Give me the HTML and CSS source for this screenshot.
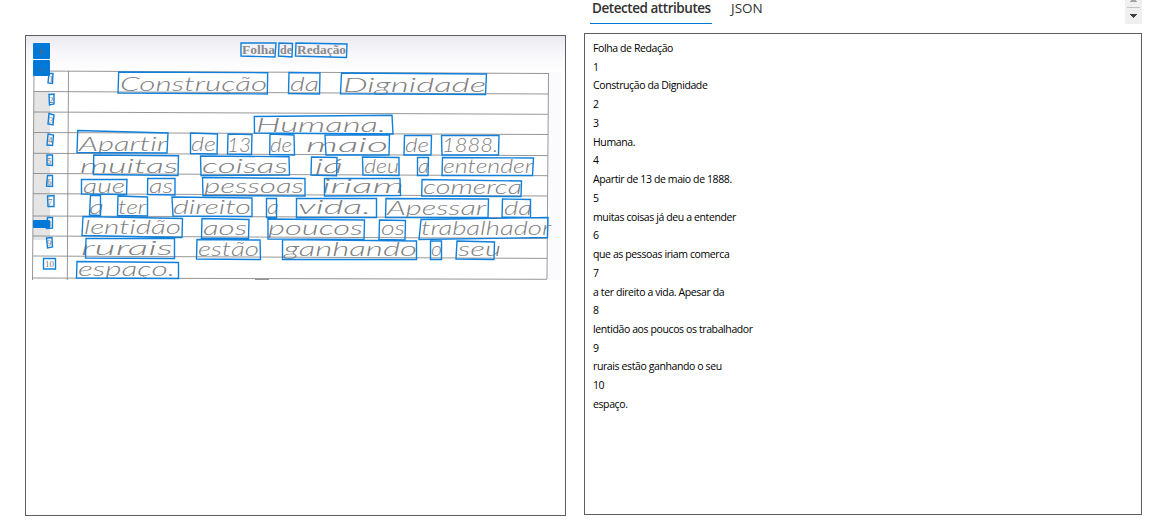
FILE: index.html
```html
<!DOCTYPE html>
<html lang="en">
<head>
<meta charset="utf-8">
<title>Detected attributes</title>
<link rel="stylesheet" href="styles.css">
</head>
<body>
<main class="workspace">
  <section class="document-panel">
    <svg class="scan" viewBox="26 36 539 479" width="539" height="479">
      <defs>
        <linearGradient id="paper" x1="0" y1="0" x2="0" y2="1">
          <stop offset="0" stop-color="#e9e8ee"/><stop offset=".4" stop-color="#f6f6fa"/><stop offset="1" stop-color="#fff"/>
        </linearGradient>
      </defs>
      <rect x="26" y="36" width="539" height="36" fill="url(#paper)"/>
      <rect x="549" y="72" width="12" height="208" fill="#fbfbfe"/>
      <path class="margin-shade" d="M34 92H50V240H33Z"/>
      <path class="rule" d="M34 71L548.500 73.500M34 91.500L548 94M34 112L548 114.300M34 132.500L548 134.500M33 153.300L548 155.600M33 173.500L548 175.700M33 193.700L547 196M33 216L547 217.700M33 236L547 238.400M33 256L547 258.400M32 278L547 279.300M34 71L32.500 280M68.500 71L67.300 280M548.500 73L547 279M255 279.500h14"/>
      <g class="printed">
        <text x="242" y="54" textLength="33" lengthAdjust="spacingAndGlyphs">Folha</text>
        <text x="280" y="54" textLength="12" lengthAdjust="spacingAndGlyphs">de</text>
        <text x="297" y="54" textLength="49" lengthAdjust="spacingAndGlyphs">Redação</text>
      </g>
      <g class="numbers">
        <text x="49" y="82">1</text><text x="49" y="103">2</text><text x="49" y="123">3</text><text x="48" y="143">4</text><text x="47" y="164">5</text><text x="47" y="185">6</text><text x="48" y="205">7</text><text x="47" y="227">8</text><text x="47" y="246">9</text><text x="45" y="267" textLength="9">10</text>
      </g>
      <g class="handwriting">
        <text x="120" y="91" textLength="147" lengthAdjust="spacingAndGlyphs">Construção</text>
        <text x="290" y="91" textLength="29" lengthAdjust="spacingAndGlyphs">da</text>
        <text x="343" y="92" textLength="143" lengthAdjust="spacingAndGlyphs">Dignidade</text>
        <text x="256" y="132" textLength="130" lengthAdjust="spacingAndGlyphs">Humana.</text>
        <text x="79" y="151" textLength="88" lengthAdjust="spacingAndGlyphs">Apartir</text>
        <text x="191" y="151" textLength="25" lengthAdjust="spacingAndGlyphs">de</text>
        <text x="227" y="152" textLength="24" lengthAdjust="spacingAndGlyphs">13</text>
        <text x="270" y="152" textLength="22" lengthAdjust="spacingAndGlyphs">de</text>
        <text x="306" y="152" textLength="82" lengthAdjust="spacingAndGlyphs">maio</text>
        <text x="405" y="152" textLength="24" lengthAdjust="spacingAndGlyphs">de</text>
        <text x="442" y="152" textLength="56" lengthAdjust="spacingAndGlyphs">1888.</text>
        <text x="80" y="173" textLength="98" lengthAdjust="spacingAndGlyphs">muitas</text>
        <text x="202" y="173" textLength="86" lengthAdjust="spacingAndGlyphs">coisas</text>
        <text x="315" y="173" textLength="28" lengthAdjust="spacingAndGlyphs">já</text>
        <text x="364" y="173" textLength="35" lengthAdjust="spacingAndGlyphs">deu</text>
        <text x="418" y="173" textLength="11" lengthAdjust="spacingAndGlyphs">a</text>
        <text x="443" y="173" textLength="90" lengthAdjust="spacingAndGlyphs">entender</text>
        <text x="83" y="193" textLength="42" lengthAdjust="spacingAndGlyphs">que</text>
        <text x="149" y="193" textLength="24" lengthAdjust="spacingAndGlyphs">as</text>
        <text x="204" y="193" textLength="100" lengthAdjust="spacingAndGlyphs">pessoas</text>
        <text x="322" y="193" textLength="82" lengthAdjust="spacingAndGlyphs">iriam</text>
        <text x="423" y="194" textLength="99" lengthAdjust="spacingAndGlyphs">comerca</text>
        <text x="89" y="214" textLength="15" lengthAdjust="spacingAndGlyphs">a</text>
        <text x="118" y="214" textLength="28" lengthAdjust="spacingAndGlyphs">ter</text>
        <text x="173" y="214" textLength="78" lengthAdjust="spacingAndGlyphs">direito</text>
        <text x="267" y="214" textLength="12" lengthAdjust="spacingAndGlyphs">a</text>
        <text x="298" y="214" textLength="73" lengthAdjust="spacingAndGlyphs">vida.</text>
        <text x="387" y="215" textLength="99" lengthAdjust="spacingAndGlyphs">Apessar</text>
        <text x="504" y="215" textLength="28" lengthAdjust="spacingAndGlyphs">da</text>
        <text x="84" y="234" textLength="97" lengthAdjust="spacingAndGlyphs">lentidão</text>
        <text x="203" y="235" textLength="44" lengthAdjust="spacingAndGlyphs">aos</text>
        <text x="268" y="235" textLength="95" lengthAdjust="spacingAndGlyphs">poucos</text>
        <text x="381" y="235" textLength="24" lengthAdjust="spacingAndGlyphs">os</text>
        <text x="421" y="235" textLength="130" lengthAdjust="spacingAndGlyphs">trabalhador</text>
        <text x="81" y="255" textLength="92" lengthAdjust="spacingAndGlyphs">rurais</text>
        <text x="198" y="256" textLength="61" lengthAdjust="spacingAndGlyphs">estão</text>
        <text x="284" y="256" textLength="133" lengthAdjust="spacingAndGlyphs">ganhando</text>
        <text x="431" y="256" textLength="11" lengthAdjust="spacingAndGlyphs">o</text>
        <text x="458" y="256" textLength="43" lengthAdjust="spacingAndGlyphs">seu</text>
        <text x="78" y="276" textLength="97" lengthAdjust="spacingAndGlyphs">espaço.</text>
      </g>
      <path class="word-box" d="
        M241 43H276L275 57L241 56ZM279 43L292.500 43.500L292 57L278.500 56ZM296 43L347 44L346.500 57.500L295.500 56Z
        M118.700 72L267.700 72.700L267.300 94L118 93ZM289 72.500L320 73L319.500 94L288.500 93.500ZM341.500 73L486.500 74L485.500 94.500L340.500 93.700Z
        M254.300 116.500L392 115.300L393 134L254.500 133Z
        M77.700 130.500L168 133L167 153L77 152.500ZM190.500 133L217.500 134L217 154L190.500 153.500ZM228 134L252 134.500L251.500 154.500L227.500 154ZM270 134L294 135L294.500 155L269.700 154.500ZM325 135H389.500L389 155H326ZM404.500 135.500H431.500L431 155H404ZM441.500 135.500H499L498.500 155H442Z
        M93.700 155L178.500 155.700L178 175.500L93.500 174.500ZM200.500 156L289 156.700L289.500 175L201 175.500ZM311.500 157L337 157.500L336.500 175.700L311 175ZM362.500 157L399 157.500V175.500L363 175ZM417.500 157.500H428.500L428 175.500H417.500ZM442.500 157.500L533.500 158L532.500 175.500H442Z
        M81.500 179.500H127L126.500 194.500L81.500 194ZM147.700 178.500H175V195L147.500 194.500ZM202.500 177.500L305 178.500V196L203 195.500ZM324.500 178.500H400L400.500 195.500L324.500 196ZM422 179.500L521.500 181L521 196.500L421.700 196Z
        M90.500 195.500H100.500V215.500L89.500 215ZM118 196L147.500 197V216L117.500 215.500ZM172 197L252 198V216.500L173 216ZM266.500 198.500H276.500V217.500H266.500ZM296.500 198.500H376.500V217.500H296.500ZM386 198.500L488.500 199L488 217.500H385.500ZM502.500 199L530.500 199.500V217.500L502 217Z
        M83 216.500L182.500 218.500L182 237.500L82 235.500ZM202 218.500L249 219.500L248.500 238.500L201.500 238ZM268 219L364.500 220L364 239.500L268 239ZM379.500 220L405.500 220.500L405 240L379 239.500ZM421 219.500L548 217.500L547.500 237.500L419 239.500Z
        M86 238.500H174.500V258.500L85.500 258ZM197 239.500L260 240L260.500 259.500L196.500 259ZM282.500 239.500L416.500 241V259.500H282.500ZM430.500 241H441.500V259.500H430.500ZM457 241L494.500 242L494 259.500L456 259Z
        M77 261.500L178.500 262.500V278.500L76.500 278Z
        M49 73.500H53L52.500 83.500L48 83ZM49 94.500L54 94V104L49.500 105ZM49 113.500L54 115L53 125L48 124ZM48 134L53.500 135L52.500 145.500L47 145ZM47 155H52.500V165.500L47 165ZM47.500 175.500H52.500V186.500L46.500 186ZM47.500 196L54 195.500V206.500H48ZM47.500 217.500H52.500V228L46.500 228.500ZM46.500 238L52 237.500L52.500 247L47.500 248ZM43.500 258.500H55.500V269H43.500Z"/>
      <g class="zoom-controls">
        <rect x="33" y="43" width="17" height="16" rx="1"/>
        <rect x="33" y="60" width="17" height="16" rx="1"/>
        <rect x="33" y="220" width="17" height="8" rx="1"/>
        <path d="M39 51.500h5M41.500 49v5M39 69.500h5"/>
      </g>
    </svg>
  </section>
  <section class="results">
    <header class="toolbar">
      <nav class="tabs">
        <span class="tab selected">Detected attributes</span>
        <span class="tab">JSON</span>
      </nav>
      <svg class="spinner" width="17" height="24" viewBox="0 0 17 24" shape-rendering="crispEdges">
        <path fill="#f0f0f0" d="M0 0h17v24H0z"/>
        <path fill="#a3a3a3" d="M6 0h5v1h1v1H5V1h1z"/>
        <path fill="#c3c3c3" d="M2 7h13v1H2z"/>
        <path fill="#404040" d="M5 14h7v1h-1v1h-1v1H9v1H8v-1H7v-1H6v-1H5z"/>
      </svg>
    </header>
    <div class="output">
      <div>Folha de Redação</div><div>1</div><div>Construção da Dignidade</div><div>2</div><div>3</div><div>Humana.</div><div>4</div><div>Apartir de 13 de maio de 1888.</div><div>5</div><div>muitas coisas já deu a entender</div><div>6</div><div>que as pessoas iriam comerca</div><div>7</div><div>a ter direito a vida. Apesar da</div><div>8</div><div>lentidão aos poucos os trabalhador</div><div>9</div><div>rurais estão ganhando o seu</div><div>10</div><div>espaço.</div>
    </div>
  </section>
</main>
</body>
</html>
```

FILE: styles.css
```css
* { box-sizing: border-box; }
body { margin: 0; background: #fff; font-family: "Open Sans", "Noto Sans", sans-serif; }
.workspace { display: flex; align-items: flex-start; gap: 18px; height: 523px; padding-left: 25px; overflow: hidden; }
.document-panel { width: 541px; height: 481px; margin-top: 35px; border: 1px solid #605e5c; }
.scan { display: block; }
.margin-shade { fill: #e5e5e5; }
.rule { fill: none; stroke: #858587; stroke-width: 1; opacity: .85; }
.printed { font: bold 12px "Liberation Serif", serif; fill: #8a8a8e; }
.numbers { font: 9px "Liberation Serif", serif; fill: #777; }
.handwriting { font: italic 300 19px Lato, sans-serif; font-variant-ligatures: none; fill: #808082; }
.word-box { fill: none; stroke: #1080dc; stroke-width: 1.4; }
.zoom-controls rect { fill: #0078d7; }
.zoom-controls path { stroke: #50677e; stroke-width: 1; }
.results { width: 558px; }
.toolbar { display: flex; justify-content: space-between; height: 33px; }
.tabs { display: flex; gap: 17px; padding-left: 6px; }
.tab { height: 24px; padding: 0 2px; font-size: 13.5px; line-height: 17px; color: #323130; white-space: nowrap; }
.selected { width: 122px; border-bottom: 1px solid #0078d4; font-weight: 600; letter-spacing: -.45px; }
.output { height: 482px; border: 1px solid #605e5c; padding: 5px 8px; font-size: 10.5px; line-height: 18.74px; letter-spacing: -.39px; color: #000; }
```
